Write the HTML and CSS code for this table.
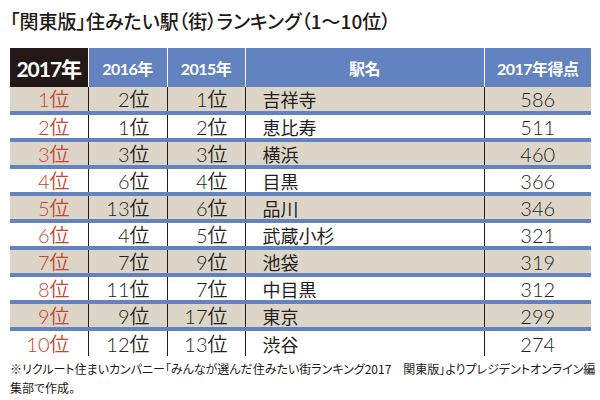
FILE: index.html
```html
<!DOCTYPE html>
<html lang="ja">
<head>
<meta charset="utf-8">
<link rel="stylesheet" href="styles.css">
</head>
<body>
<div class="page">
  <h1 class="title">「関東版」住みたい駅（街）ランキング（1〜10位）</h1>
  <table class="rank">
    <colgroup>
      <col class="c1"><col class="c2"><col class="c3"><col class="c4"><col class="c5">
    </colgroup>
    <thead>
      <tr>
        <th class="h-cur">2017年</th>
        <th>2016年</th>
        <th>2015年</th>
        <th>駅名</th>
        <th>2017年得点</th>
      </tr>
    </thead>
    <tbody>
      <tr class="odd"><td class="cur">1位</td><td class="r">2位</td><td class="r">1位</td><td class="st">吉祥寺</td><td class="sc">586</td></tr>
      <tr><td class="cur">2位</td><td class="r">1位</td><td class="r">2位</td><td class="st">恵比寿</td><td class="sc">511</td></tr>
      <tr class="odd"><td class="cur">3位</td><td class="r">3位</td><td class="r">3位</td><td class="st">横浜</td><td class="sc">460</td></tr>
      <tr><td class="cur">4位</td><td class="r">6位</td><td class="r">4位</td><td class="st">目黒</td><td class="sc">366</td></tr>
      <tr class="odd"><td class="cur">5位</td><td class="r">13位</td><td class="r">6位</td><td class="st">品川</td><td class="sc">346</td></tr>
      <tr><td class="cur">6位</td><td class="r">4位</td><td class="r">5位</td><td class="st">武蔵小杉</td><td class="sc">321</td></tr>
      <tr class="odd"><td class="cur">7位</td><td class="r">7位</td><td class="r">9位</td><td class="st">池袋</td><td class="sc">319</td></tr>
      <tr><td class="cur">8位</td><td class="r">11位</td><td class="r">7位</td><td class="st">中目黒</td><td class="sc">312</td></tr>
      <tr class="odd"><td class="cur">9位</td><td class="r">9位</td><td class="r">17位</td><td class="st">東京</td><td class="sc">299</td></tr>
      <tr><td class="cur">10位</td><td class="r">12位</td><td class="r">13位</td><td class="st">渋谷</td><td class="sc">274</td></tr>
    </tbody>
  </table>
  <p class="note"><span class="line">※リクルート住まいカンパニー「みんなが選んだ住みたい街ランキング2017　関東版」よりプレジデントオンライン編</span><br>集部で作成。</p>
</div>
</body>
</html>
```

FILE: styles.css
```css
* { box-sizing: border-box; }
html, body { margin: 0; padding: 0; background: #ffffff; }
body {
  font-family: "Lato", "Noto Sans CJK JP", sans-serif;
  color: #231f20;
}
.page {
  width: 600px;
  height: 400px;
  padding: 9px 9px 0 10px;
  overflow: hidden;
}
.title {
  margin: 0;
  height: 39px;
  font-family: "Noto Sans CJK JP", sans-serif;
  font-feature-settings: "palt";
  font-size: 19px;
  font-weight: 500;
  line-height: 24px;
  color: #231815;
  letter-spacing: 0;
}
.rank {
  width: 581px;
  border-collapse: collapse;
  table-layout: fixed;
}
.c1 { width: 78px; }
.c2 { width: 79px; }
.c3 { width: 78px; }
.c4 { width: 239px; }
.c5 { width: 107px; }
.rank th {
  height: 39px;
  padding: 0;
  background: #6282c0;
  color: #ffffff;
  font-family: "Lato", "Noto Sans CJK JP", sans-serif;
  font-size: 16px;
  font-weight: 700;
  text-align: center;
  border-left: 1px solid #ffffff;
  letter-spacing: -0.5px;
}
.rank th:first-child { border-left: none; }
.rank th.h-cur {
  background: #231815;
  font-size: 21px;
  letter-spacing: -1px;
}
.rank td {
  height: 27px;
  padding: 0;
  border-top: 4px solid #6282c0;
  border-left: 1px solid #231815;
  font-size: 20px;
  font-weight: 350;
  line-height: 22px;
  vertical-align: middle;
  white-space: nowrap;
}
.rank td:first-child { border-left: none; }
.rank tbody tr:first-child td { border-top: none; height: 26px; }
.rank tr.odd td { background: #ddd6c8; }
.rank td.cur {
  color: #c8432c;
  text-align: right;
  padding-right: 18px;
}
.rank td.r {
  text-align: right;
  padding-right: 17px;
}
.rank td.st {
  padding-left: 17px;
  font-family: "Noto Sans CJK JP", sans-serif;
  font-size: 18px;
  font-weight: 400;
}
.rank td.sc {
  text-align: center;
}
.note {
  margin: 3px 0 0 0;
  font-family: "Noto Sans CJK JP", sans-serif;
  font-feature-settings: "palt";
  font-size: 12px;
  line-height: 19px;
  color: #231815;
}
.note .line { white-space: nowrap; }
```
